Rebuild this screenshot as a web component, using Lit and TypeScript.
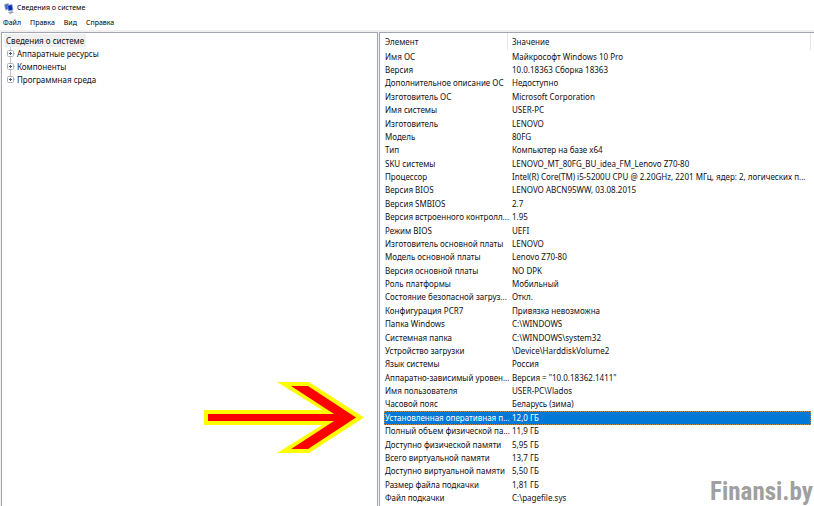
import { LitElement, html, css, svg } from "lit";
import { customElement } from "lit/decorators.js";

const MENU = ["Файл", "Правка", "Вид", "Справка"];
const TREE = ["Аппаратные ресурсы", "Компоненты", "Программная среда"];
const SELECTED = 27;
const ROWS: [string, string][] = [
  ["Имя ОС", "Майкрософт Windows 10 Pro"],
  ["Версия", "10.0.18363 Сборка 18363"],
  ["Дополнительное описание ОС", "Недоступно"],
  ["Изготовитель ОС", "Microsoft Corporation"],
  ["Имя системы", "USER-PC"],
  ["Изготовитель", "LENOVO"],
  ["Модель", "80FG"],
  ["Тип", "Компьютер на базе x64"],
  ["SKU системы", "LENOVO_MT_80FG_BU_idea_FM_Lenovo Z70-80"],
  ["Процессор", "Intel(R) Core(TM) i5-5200U CPU @ 2.20GHz, 2201 МГц, ядер: 2, логических п..."],
  ["Версия BIOS", "LENOVO ABCN95WW, 03.08.2015"],
  ["Версия SMBIOS", "2.7"],
  ["Версия встроенного контролл...", "1.95"],
  ["Режим BIOS", "UEFI"],
  ["Изготовитель основной платы", "LENOVO"],
  ["Модель основной платы", "Lenovo Z70-80"],
  ["Версия основной платы", "NO DPK"],
  ["Роль платформы", "Мобильный"],
  ["Состояние безопасной загруз...", "Откл."],
  ["Конфигурация PCR7", "Привязка невозможна"],
  ["Папка Windows", "C:\\WINDOWS"],
  ["Системная папка", "C:\\WINDOWS\\system32"],
  ["Устройство загрузки", "\\Device\\HarddiskVolume2"],
  ["Язык системы", "Россия"],
  ["Аппаратно-зависимый уровен...", "Версия = \"10.0.18362.1411\""],
  ["Имя пользователя", "USER-PC\\Vlados"],
  ["Часовой пояс", "Беларусь (зима)"],
  ["Установленная оперативная п...", "12,0 ГБ"],
  ["Полный объем физической па...", "11,9 ГБ"],
  ["Доступно физической памяти", "5,95 ГБ"],
  ["Всего виртуальной памяти", "13,7 ГБ"],
  ["Доступно виртуальной памяти", "5,50 ГБ"],
  ["Размер файла подкачки", "1,81 ГБ"],
  ["Файл подкачки", "C:\\pagefile.sys"],
];

const appIcon = svg`
  <path d="M.5 1.500L4.500 .5L5.500 6L1.500 7Z" fill="#3a63c4" stroke="#a9b7d8" stroke-width=".7"/>
  <path d="M3.500 2.500L8 1.500L9 7L4.500 8Z" fill="#0b2fb0" stroke="#8ea2d0" stroke-width=".7"/>
  <path d="M4 9.500L8 8L10 9.500L6 11Z" fill="#9aa6b4"/>`;

@customElement("app-root")
export class AppRoot extends LitElement {
  static styles = css`
    :host {
      display: flex;
      flex-direction: column;
      position: relative;
      height: 100vh;
      overflow: hidden;
      background: #fff;
      color: #101018;
      font: 8px/12px "Noto Sans", "Open Sans", sans-serif;
    }
    button { font: inherit; color: inherit; background: none; border: 0; padding: 0; white-space: nowrap; }
    .title, .menu { display: flex; align-items: center; flex: none; font-size: 7px; color: #000; }
    .title { gap: 2px; height: 16px; padding-left: 4px; }
    .title svg { width: 11px; height: 11px; }
    .menu { gap: 9px; height: 14px; padding-left: 3px; }
    .panes {
      flex: 1;
      min-height: 0;
      display: grid;
      grid-template-columns: 377fr 435fr;
      gap: 1px;
      background: #f0f0f0;
      padding: 2px 0 0 1px;
    }
    .pane { background: #fff; border: 1px solid #a2a6b2; border-bottom: 0; overflow: hidden; }
    .tree { padding: 1px 2px; }
    .root { display: block; background: #f0f0f0; padding: 0 2px; height: 13px; line-height: 13px; }
    .nodes { list-style: none; margin: 0; padding: 0 0 0 3px; }
    .node { display: flex; align-items: center; gap: 2px; height: 13px; }
    .node svg { width: 8px; height: 13px; }
    .list { padding: 0 3px 1px 4px; border-right: 0; }
    .grid { width: 100%; height: 100%; border-collapse: separate; border-spacing: 0; table-layout: fixed; }
    td, th { padding: 0 0 0 4px; text-align: left; font-weight: 400; white-space: nowrap; line-height: 12px; }
    td:first-child, th:first-child { width: 124px; padding-left: 1px; box-sizing: border-box; }
    th { height: 17px; border-right: 1px solid #e5e5e5; box-sizing: border-box; }
    .sel { background: #0078d7; color: #fff; outline: 1px dotted #b98a55; outline-offset: -1px; }
    .arrow { position: absolute; left: 204px; top: 381px; width: 160px; height: 73px; }
    .mark {
      position: absolute;
      right: 1px;
      bottom: 0;
      font: bold 25px/28px "Roboto Condensed", Lato, sans-serif;
      color: #a0a0a0;
    }
  `;

  render() {
    return html`
      <header class="title"><svg viewBox="0 0 11 11">${appIcon}</svg><span>Сведения о системе</span></header>
      <nav class="menu">${MENU.map((m) => html`<button>${m}</button>`)}</nav>
      <main class="panes">
        <section class="pane tree">
          <button class="root">Сведения о системе</button>
          <ul class="nodes">${TREE.map((t, i) => html`<li class="node">
            <svg viewBox="0 0 8 13">
              <path d=${i === TREE.length - 1 ? "M3.5 0V6.5H8" : "M3.5 0V13M3.5 6.5H8"} fill="none" stroke="#c8c8c8"/>
              <rect x=".5" y="3.5" width="6" height="6" rx="1" fill="#fff" stroke="#b0b0b0"/>
              <path d="M2 6.5H5M3.5 5V8" stroke="#3c5a8c"/>
            </svg>
            <button>${t}</button></li>`)}</ul>
        </section>
        <section class="pane list">
          <table class="grid">
            <thead><tr><th>Элемент</th><th>Значение</th></tr></thead>
            <tbody>${ROWS.map(([k, v], i) => html`<tr class=${i === SELECTED ? "sel" : ""}><td>${k}</td><td>${v}</td></tr>`)}</tbody>
          </table>
        </section>
      </main>
      <svg class="arrow" viewBox="0 0 160 73">
        <path d="M0 29H118L73 1H105L160 36.500L105 72H73L118 44H0Z" fill="#ff0"/>
        <path d="M4 33H130L87 5H104L152 36.500L104 68H87L130 40H4Z" fill="#f00"/>
      </svg>
      <div class="mark">Finansi.by</div>
    `;
  }
}
